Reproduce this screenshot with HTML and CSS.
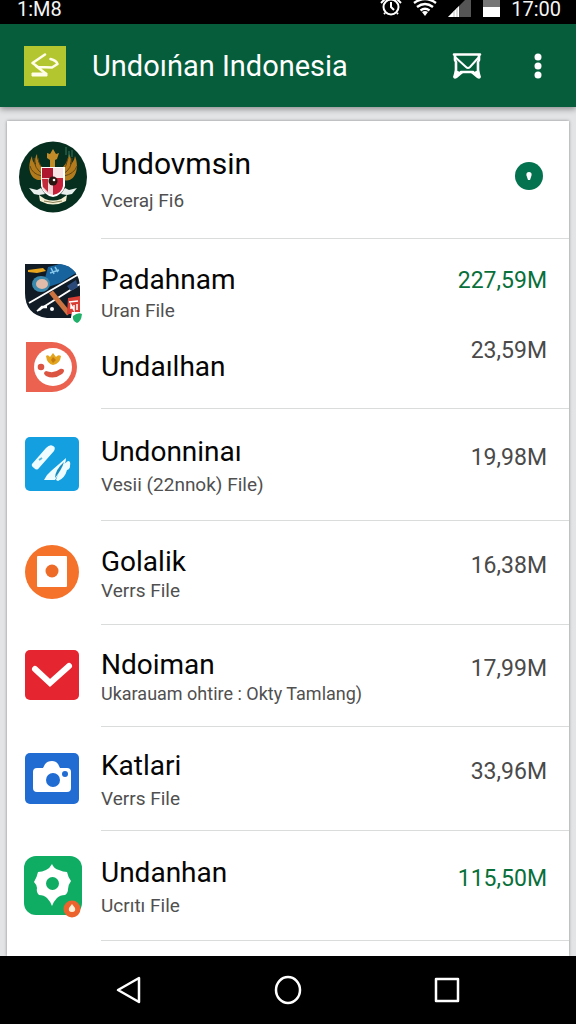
FILE: index.html
```html
<!DOCTYPE html>
<html lang="id">
<head>
<meta charset="utf-8">
<meta name="viewport" content="width=device-width, initial-scale=1">
<title>Undoıńan Indonesia</title>
<link rel="stylesheet" href="styles.css">
</head>
<body>
<div class="status-bar">
  <span class="clock">1:M8</span>
  <div class="status-icons">
    <svg width="22" height="20" viewBox="0 0 22 20" fill="none" stroke="#fff" stroke-width="2"><circle cx="11" cy="9" r="7.500"/><path d="M11 4v5l3 3M1 5l4-4M17 1l4 4M5 15l-1 1M17 15l1 1"/></svg>
    <svg width="24" height="20" viewBox="0 0 24 20" fill="none" stroke="#fff" stroke-width="2.400"><path d="M1 5Q12-3 23 5M4 9q8-6 16 0M7.500 12.500q4.500-3.500 9 0"/><path d="M9 14q3-2 6 0l-3 4z" fill="#fff" stroke="none"/></svg>
    <svg width="24" height="20" viewBox="0 0 24 20"><path d="M0 19 19 0h4v19z" fill="#555"/><path d="M0 19 11 8v11z" fill="#fff"/><path d="M6 13v6M9 10v9" stroke="#bbb" stroke-width="1"/></svg>
    <svg width="17" height="20" viewBox="0 0 17 20"><path d="M0 0h17v10H0z" fill="#777"/><path d="M0 9h17v10H0z" fill="#fff"/></svg>
  </div>
  <span class="clock">17:00</span>
</div>

<header class="app-bar">
  <svg class="logo" viewBox="0 0 42 40"><path fill="#b3c52f" d="M0 0h42v40H0z"/><path d="M21 8.500 8.500 17 14 21l14 .5 5.500-3.500q-1-3.500-7-5M12 20l9 7" fill="none" stroke="#fffde8" stroke-width="2.600" stroke-linecap="round" stroke-linejoin="round"/><path d="M8 27h15v3H8z" fill="#fffde8" stroke="#fffde8" stroke-linejoin="round"/></svg>
  <h1 class="app-title">Undoıńan Indonesia</h1>
  <button class="bar-button" aria-label="Pesan"><svg width="30" height="28" viewBox="0 0 30 28"><path d="M2 2.500h26M3 3v5l1 2v11M27 3v5l-1 2v11M9 20h12" fill="none" stroke="#fff" stroke-width="2.600" stroke-linecap="round"/><path d="m3 5 11 10q2 2 4 0l9-10" fill="none" stroke="#fff" stroke-width="2"/><path d="m3 18-2 7q1 3 4 1l6-5zM27 18l2 7q-1 3-4 1l-6-5z" fill="#fff"/></svg></button>
  <button class="bar-button bar-button-menu" aria-label="Menu"><svg width="8" height="26" viewBox="0 0 8 26" fill="#fff"><circle cx="4" cy="4" r="3.500"/><circle cx="4" cy="13" r="3.500"/><circle cx="4" cy="22" r="3.500"/></svg></button>
</header>

<main class="content">
  <ul class="card">
    <li class="row row-lead">
      <div class="row-icon">
        <svg width="68" height="72" viewBox="0 0 68 72"><ellipse cx="34" cy="36" rx="34" ry="35.500" fill="#072f20"/><path d="M25 38C14 43 6 29 13 15q0 6 4 9-2-7 1-11 0 8 5 13l9 6 4 0 8-6q5-5 6-13 3 4 1 11 4-3 5-9c6 16-3 29-13 23l-2 4H27z" fill="#b47b1d"/><path d="M15 17q0 11 9 16M11 25q2 8 12 10M19 17q1 8 7 13M53 17q0 11-9 16M58 25q-3 8-13 10M49 17q-1 8-6 13" fill="none" stroke="#614514"/><path d="m28 12 3 1 3-5 3 5 3-1-2 6-2 1v7h-5v-7l-3-2z" fill="#c28c28"/><path d="M47 6v8M50 10v6M53 9v7" stroke="#39785a"/><path d="m10 47 8 2 4-2 4 6-6 1-5-1zM58 47l-8 2-4-2-4 6 6 1 5-1z" fill="#e9efec"/><path d="M22 26h24v19q-2 9-12 11-10-2-12-11z" fill="#fff"/><path d="M23 27h11v10H23z" fill="#ad1830"/><path d="M34 27h10v10H34z" fill="#f8e3e5"/><path d="M23 37h11v17q-10-2-11-9z" fill="#f2d4d6"/><path d="M34 37h10v8q-1 7-10 9z" fill="#c51f39"/><path d="M23 38h6v13l-5-5z" fill="#c22a3c"/><circle cx="34" cy="40" r="4.500" fill="#291610"/><circle cx="35" cy="39" r="1.300" fill="#fff"/><path d="m20 54 6 4q8 3 16 0l6-4-1 6q-13 7-26 0z" fill="#f4eed3"/><path d="M25 60q9 3 18 0" fill="none" stroke="#887d55"/></svg>
      </div>
      <div class="row-body">
        <div class="row-text"><h2 class="name name-lead">Undovmsin</h2><p class="detail">Vceraj Fi6</p></div>
        <button class="info" aria-label="Info"><svg width="28" height="28" viewBox="0 0 28 28"><circle cx="14" cy="14" r="14" fill="#04724f"/><path d="M14 10c2 0 3 1.500 2.500 3.500L15 18h-2l-1.500-4.500C11 11.500 12 10 14 10z" fill="#fff"/></svg></button>
      </div>
    </li>

    <li class="row row-upper">
      <div class="row-icon">
        <svg width="58" height="60" viewBox="0 0 58 60"><path d="M1 1h32q23 2 23 25v29H23Q1 52 1 30z" fill="#101b25"/><path d="m24 4 12-3q10 1 16 9l-16 10-18 6z" fill="#17639d"/><path d="m4 7 15-2 3 3-9 2-9-1z" fill="#e9a51e"/><path d="m27 5 3 6M31 4l3 5M26 10l9-3" stroke="#82c6e9" stroke-width="1.500"/><ellipse cx="17" cy="21" rx="9" ry="8" fill="#3b89ad"/><ellipse cx="18" cy="21" rx="6" ry="5" fill="#e1bcaa"/><path d="M5 40 55 11M13 48 56 21" stroke="#fff" stroke-width="2"/><path d="m43 23 9-6 2 7-7 4z" fill="#2b4a79"/><path d="m27 29 18 22" stroke="#cb7441" stroke-width="5"/><path d="m15 47 3-3 5 0" fill="none" stroke="#fff" stroke-width="2.500"/><circle cx="28" cy="46" r="2" fill="#fff"/><path d="m44 35 12-2v18H43z" fill="#d83e34"/><path d="m45 39 9-1M47 46v-4l3 5v-5M53 41v6" fill="none" stroke="#fff" stroke-width="1.500"/><path d="M48 49h10v11H46z" fill="#fff"/><path d="M49 53q5-4 9-2-1 8-5 9-5-2-4-7z" fill="#20b069"/></svg>
      </div>
      <div class="row-body">
        <div class="row-text"><h2 class="name">Padahnam</h2><p class="detail">Uran File</p></div>
        <span class="size size-active">227,59M</span>
      </div>
    </li>

    <li class="row row-lower">
      <div class="row-icon">
        <svg width="54" height="50" viewBox="0 0 54 50"><path d="M0 0h26a25 25 0 0 1 0 50H0z" fill="#eb6350"/><circle cx="27" cy="25" r="19" fill="#fff"/><path d="M20 14q2-2 4 1l3-4 3 4q2-3 5-1-1 8-8 9-6-1-7-9z" fill="#e3a51d"/><path d="m25 18 2-3 3 3-3 3z" fill="#c67b12"/><circle cx="15" cy="25" r="3.300" fill="#dc5543"/><path d="M20 29q8 3 14-2c5-1 5 3 2 5q-8 6-16 2-4-3 0-5z" fill="#dc5543"/></svg>
      </div>
      <div class="row-body">
        <div class="row-text"><h2 class="name">Undaılhan</h2></div>
        <span class="size">23,59M</span>
      </div>
    </li>

    <li class="row row-tall">
      <div class="row-icon">
        <svg width="54" height="54" viewBox="0 0 54 54"><rect width="54" height="54" rx="5" fill="#139fe0"/><path d="M7 27 21 11q4-4 7-2 3 1 1 5L14 31q-2 3-5 0-3-2-2-4z" fill="#effcff"/><path d="m14 23 3-2" stroke="#58b9d8" stroke-width="2"/><path d="M19 43q2-5 7-9l15-13q0 5-4 10l-7 12z" fill="#effcff"/><path d="M31 43q2-7 8-16l4-3q3 0 2 5 0 3-3 4-2 8-9 11z" fill="#effcff"/><path d="M30 41q0-8 9-16-2 7-9 16z" fill="#178cbd"/></svg>
      </div>
      <div class="row-body">
        <div class="row-text"><h2 class="name">Undonninaı</h2><p class="detail">Vesii (22nnok) File)</p></div>
        <span class="size">19,98M</span>
      </div>
    </li>

    <li class="row">
      <div class="row-icon">
        <svg width="54" height="54" viewBox="0 0 54 54"><circle cx="27" cy="27" r="27" fill="#f4722a"/><rect x="12" y="11" width="30" height="31" rx="1" fill="#fff"/><circle cx="27" cy="26" r="6.500" fill="#ee6b27"/></svg>
      </div>
      <div class="row-body">
        <div class="row-text text-tight"><h2 class="name">Golalik</h2><p class="detail">Verrs File</p></div>
        <span class="size">16,38M</span>
      </div>
    </li>

    <li class="row row-short">
      <div class="row-icon">
        <svg width="54" height="50" viewBox="0 0 54 50"><rect width="54" height="50" rx="5" fill="#e5252f"/><path d="m10 19 15 14 19-17" fill="none" stroke="#fff" stroke-width="6" stroke-linecap="round"/></svg>
      </div>
      <div class="row-body">
        <div class="row-text text-tight"><h2 class="name">Ndoiman</h2><p class="detail detail-long">Ukarauam ohtire : Okty Tamlang)</p></div>
        <span class="size">17,99M</span>
      </div>
    </li>

    <li class="row">
      <div class="row-icon">
        <svg width="54" height="51" viewBox="0 0 54 51"><rect width="54" height="51" rx="5" fill="#206cd3"/><path d="M12 15h6q2-7 9-7 6 0 8 7h7q4 0 4 4v16q0 4-4 4H12q-4 0-4-4V19q0-4 4-4z" fill="#fff"/><circle cx="28" cy="27" r="7" fill="#206cd3"/><circle cx="40" cy="21" r="3" fill="#206cd3"/></svg>
      </div>
      <div class="row-body">
        <div class="row-text"><h2 class="name">Katlari</h2><p class="detail">Verrs File</p></div>
        <span class="size">33,96M</span>
      </div>
    </li>

    <li class="row row-medium">
      <div class="row-icon">
        <svg width="58" height="62" viewBox="0 0 58 62"><rect width="58" height="59" rx="12" fill="#0ead63"/><path d="M28 8q2 5 7 6 4 2 8 2 1 5 4 9-3 4-3 8 0 4-3 6-5 0-8 3-3 3-5 8-2-5-5-8-3-3-8-3-3-3-2-7 0-3-3-6 3-5 4-10 4 0 8-2 4-2 6-6z" fill="#fff"/><circle cx="28.500" cy="27.500" r="6.500" fill="#0ead63"/><circle cx="48" cy="53" r="8.500" fill="#ec632d"/><path d="m48 48 3 4q1 4-3 4t-3-4z" fill="#fff1d9"/></svg>
      </div>
      <div class="row-body">
        <div class="row-text"><h2 class="name">Undanhan</h2><p class="detail">Ucrıtı File</p></div>
        <span class="size size-active">115,50M</span>
      </div>
    </li>
  </ul>
</main>

<nav class="nav-bar" aria-label="Navigasi">
  <button aria-label="Kembali"><svg width="28" height="30" viewBox="0 0 28 30"><path d="M24 3v24L3 15z"/></svg></button>
  <button aria-label="Beranda"><svg width="28" height="30" viewBox="0 0 28 30"><ellipse cx="14" cy="15" rx="12" ry="13"/></svg></button>
  <button aria-label="Terbaru"><svg width="28" height="30" viewBox="0 0 28 30"><path d="M3 4h22v22H3z"/></svg></button>
</nav>
</body>
</html>
```

FILE: styles.css
```css
* {
  box-sizing: border-box;
}

body {
  margin: 0;
  min-height: 100vh;
  display: flex;
  flex-direction: column;
  background: #e3e4e5;
  font-family: Roboto, "Liberation Sans", sans-serif;
  color: #050505;
}

h1,
h2,
p,
ul {
  margin: 0;
  padding: 0;
}

button {
  display: flex;
  align-items: center;
  justify-content: center;
  padding: 0;
  border: 0;
  background: none;
  cursor: pointer;
}

svg {
  display: block;
  flex: none;
}

.status-bar {
  display: flex;
  align-items: center;
  height: 24px;
  padding: 0 15px 6px 17px;
  background: #000;
  color: #f4f4f4;
}

.clock {
  font-size: 20px;
  line-height: 18px;
}

.status-icons {
  display: flex;
  gap: 11px;
  margin-left: auto;
  margin-right: 11px;
  padding-bottom: 2px;
}

.app-bar {
  position: relative;
  display: flex;
  align-items: center;
  height: 83px;
  padding: 0 34px 0 24px;
  background: #055d3b;
  color: #fff;
  box-shadow: 0 2px 6px rgba(0, 0, 0, 0.4);
}

.logo {
  width: 42px;
  height: 40px;
}

.app-title {
  flex: 1;
  margin-left: 26px;
  font-size: 29px;
  line-height: 36px;
  font-weight: 400;
}

.bar-button-menu {
  margin-left: 52px;
}

.content {
  flex: 1;
  display: flex;
  padding: 14px 7px 0;
}

.card {
  flex: 1;
  min-width: 0;
  list-style: none;
  background: #fff;
  box-shadow: 0 0 3px rgba(0, 0, 0, 0.4);
}

.row {
  display: flex;
  min-height: 104px;
}

.row-icon {
  flex: none;
  display: flex;
  align-items: center;
  justify-content: center;
  width: 94px;
  padding: 0 4px 2px 0;
}

.row-body {
  flex: 1;
  min-width: 0;
  display: flex;
  align-items: center;
  justify-content: space-between;
  padding-right: 22px;
  border-bottom: 1px solid #dadcdc;
}

.row-text {
  display: flex;
  flex-direction: column;
  gap: 4px;
  padding-top: 4px;
}

.text-tight {
  gap: 0;
}

.name {
  font-size: 28px;
  line-height: 32px;
  font-weight: 400;
}

.detail {
  font-size: 19px;
  line-height: 26px;
  color: #505050;
}

.detail-long {
  font-size: 18px;
}

.size {
  padding-bottom: 14px;
  font-size: 23px;
  line-height: 28px;
  color: #4a4a4a;
}

.size-active {
  color: #08703a;
}

.row-lead {
  min-height: 118px;
}

.row-lead .row-icon {
  padding: 0 2px 6px 0;
}

.row-lead .row-text {
  gap: 8px;
  padding-top: 2px;
}

.name-lead {
  font-size: 30px;
}

.info {
  margin-right: 4px;
  padding-bottom: 8px;
}

.row-upper {
  min-height: 90px;
}

.row-upper .row-icon {
  padding: 18px 2px 0 0;
}

.row-upper .row-body {
  padding-top: 16px;
  border-bottom: 0;
}

.row-upper .row-text {
  gap: 2px;
}

.row-upper .size {
  padding-bottom: 22px;
}

.row-lower {
  min-height: 80px;
}

.row-lower .row-icon {
  padding: 0 2px 4px 0;
}

.row-lower .row-body {
  padding-bottom: 8px;
}

.row-lower .size {
  padding-bottom: 28px;
}

.row-tall {
  min-height: 112px;
}

.row-short {
  min-height: 102px;
}

.row-medium {
  min-height: 110px;
}

.row-medium .row-icon {
  padding: 2px 2px 0 0;
}

.nav-bar {
  position: relative;
  display: flex;
  height: 68px;
  padding: 0 50px;
  background: #000;
}

.nav-bar button {
  flex: 1;
}

.nav-bar svg {
  fill: none;
  stroke: #fff;
  stroke-width: 2.5px;
  stroke-linejoin: round;
}
```
